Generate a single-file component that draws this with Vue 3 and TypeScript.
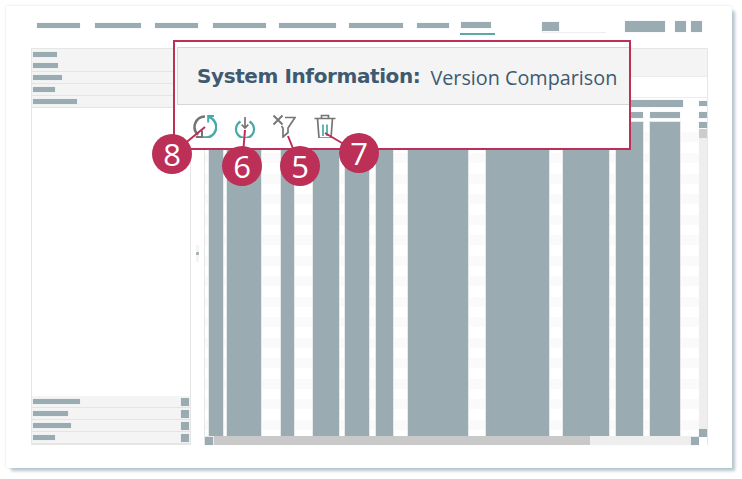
<script setup lang="ts">
interface NavItem { w: number; gap: number; active?: boolean }
interface Col { w: number; gap: number }

const navItems: NavItem[] = [
  { w: 43, gap: 15 }, { w: 46, gap: 14 }, { w: 43, gap: 15 }, { w: 53, gap: 13 },
  { w: 57, gap: 13 }, { w: 54, gap: 14 }, { w: 32, gap: 11 }, { w: 30, gap: 47, active: true },
]
const topRows = [24, 25, 29, 22, 44]
const bottomRows = [47, 35, 38, 22]
const cols: Col[] = [
  { w: 14, gap: 4 }, { w: 34, gap: 20 }, { w: 13, gap: 19 }, { w: 26, gap: 6 },
  { w: 24, gap: 7 }, { w: 17, gap: 15 }, { w: 60, gap: 18 }, { w: 63, gap: 14 },
  { w: 46, gap: 7 }, { w: 27, gap: 7 }, { w: 30, gap: 0 },
]
const badges = [
  { n: 8, key: 'b8' }, { n: 6, key: 'b6' }, { n: 5, key: 'b5' }, { n: 7, key: 'b7' },
]
</script>

<template>
  <div class="page">
    <div class="card">
      <header class="nav">
        <div
          v-for="(item, i) in navItems"
          :key="i"
          class="nav-item"
          :class="{ active: item.active }"
          :style="{ marginRight: item.gap + 'px' }"
        >
          <span class="bar nav-bar" :style="{ width: item.w + 'px' }"></span>
        </div>
        <div class="search"><span class="bar search-bar"></span></div>
        <span class="bar action wide"></span>
        <span class="bar action small first"></span>
        <span class="bar action small"></span>
      </header>

      <main class="main">
        <aside class="left">
          <div class="left-rows">
            <div class="row double">
              <span class="bar row-bar" :style="{ width: topRows[0] + 'px' }"></span>
              <span class="bar row-bar" :style="{ width: topRows[1] + 'px' }"></span>
            </div>
            <div v-for="w in topRows.slice(2)" :key="w" class="row">
              <span class="bar row-bar" :style="{ width: w + 'px' }"></span>
            </div>
          </div>
          <div class="left-rows bottom">
            <div v-for="w in bottomRows" :key="w" class="row spread">
              <span class="bar row-bar" :style="{ width: w + 'px' }"></span>
              <span class="bar row-square"></span>
            </div>
          </div>
        </aside>

        <div class="splitter"><span class="grip"></span></div>

        <section class="right">
          <div class="right-head"></div>
          <div class="right-sub"></div>
          <div class="grid">
            <div class="grid-main">
              <div class="grid-top"><span class="bar grid-top-bar"></span></div>
              <div class="columns">
                <div
                  v-for="(c, i) in cols"
                  :key="i"
                  class="col"
                  :style="{ width: c.w + 'px', marginRight: c.gap + 'px' }"
                >
                  <span class="bar col-head"></span>
                  <span class="bar col-body"></span>
                </div>
              </div>
              <div class="hscroll">
                <span class="bar sb-btn"></span>
                <span class="h-thumb"></span>
                <span class="h-track"></span>
                <span class="bar sb-btn"></span>
              </div>
            </div>
            <div class="vscroll">
              <span class="bar v-a"></span>
              <span class="bar v-b"></span>
              <span class="bar v-c"></span>
              <span class="v-thumb"></span>
              <span class="v-track"></span>
              <span class="bar v-d"></span>
              <span class="v-corner"></span>
            </div>
          </div>
        </section>
      </main>
    </div>

    <div class="callout">
      <div class="callout-head">
        <span class="title">System Information:</span>
        <span class="subtitle">Version Comparison</span>
      </div>
      <div class="tools">
        <svg class="icon" viewBox="0 0 24 24" fill="none" stroke-width="2.5">
          <path d="M12 2.4A10.5 10.5 0 0 0 5.2 20.8" stroke="#757575" />
          <path d="M9 16.6V23H2.8" stroke="#757575" stroke-width="2" />
          <path d="M15.4 2.9A10.5 10.5 0 1 1 10 23.2" stroke="#48aaa6" />
          <path d="M21 2H15.2V8.4" stroke="#48aaa6" stroke-width="2" />
        </svg>
        <svg class="icon" viewBox="0 0 24 24" fill="none">
          <path d="M7.5 7.5A9 9 0 1 0 16.5 7.5" stroke="#48aaa6" stroke-width="2.2" />
          <path d="M12 3V14M8.7 10.7L12 14L15.3 10.7" stroke="#757575" stroke-width="1.7" />
        </svg>
        <svg class="icon" viewBox="0 0 24 24" fill="none" stroke="#757575" stroke-width="1.7">
          <path d="M1.5 1.5L10.5 10.5M10.5 1.5L1.5 10.5" stroke-width="1.9" />
          <path d="M13 3.5H23L16 14V18.5L11 23V14L9.5 12" />
        </svg>
        <svg class="icon" viewBox="0 0 24 24" fill="none" stroke="#757575" stroke-width="1.7">
          <path d="M1.5 4.5H22.5M8.5 4.5V1.5H15.5V4.5" />
          <path d="M4.5 4.5L6 24H18L19.5 4.5" />
          <path d="M10 10.5V22M14 10.5V22" stroke="#48aaa6" />
        </svg>
      </div>
    </div>

    <svg class="leaders" viewBox="0 0 742 479">
      <path d="M205 127L172 154M245 130L242 166M288 136L300 166M325 133L359 153" />
    </svg>
    <div v-for="b in badges" :key="b.key" class="badge" :class="b.key">{{ b.n }}</div>
  </div>
</template>

<style scoped>
.page {
  position: relative;
  width: 742px;
  height: 479px;
  overflow: hidden;
  background: #fff;
  padding: 6px 0 0 6px;
  box-sizing: border-box;
}
.card {
  width: 726px;
  height: 462px;
  background: #fff;
  box-shadow: 4px 4px 3px -1px #b6c6cc, 0 0 2px #d3dcdf;
}
.bar {
  display: block;
  background: #9aabb2;
  box-shadow: 0 0 1px #d5dcdf;
}

/* nav */
.nav {
  height: 42px;
  box-sizing: border-box;
  padding: 15px 0 0 31px;
  display: flex;
  align-items: flex-start;
}
.nav-item {
  padding-top: 2px;
}
.nav-bar {
  height: 5px;
}
.nav-item.active {
  width: 35px;
  height: 14px;
  border-bottom: 2px solid #5aa9a5;
  padding-left: 1px;
  box-sizing: border-box;
  padding-top: 1px;
}
.nav-item.active .nav-bar {
  height: 6px;
}
.search {
  width: 64px;
  height: 10px;
  margin: 1px 19px 0 0;
  border-bottom: 1px solid #eee;
}
.search-bar {
  width: 17px;
  height: 9px;
}
.action {
  height: 11px;
}
.wide {
  width: 40px;
  margin-right: 10px;
}
.small {
  width: 11px;
}
.first {
  margin-right: 5px;
}

/* main */
.main {
  margin-left: 25px;
  height: 397px;
  display: flex;
}
.left {
  width: 160px;
  box-sizing: border-box;
  border: 1px solid #e6e6e6;
  display: flex;
  flex-direction: column;
  justify-content: space-between;
}
.row {
  height: 12px;
  box-sizing: border-box;
  background: #f4f4f4;
  border-bottom: 1px solid #e4e4e4;
  padding-left: 1px;
  display: flex;
  align-items: center;
}
.row.double {
  height: 23px;
  flex-direction: column;
  align-items: flex-start;
  justify-content: space-around;
}
.row.spread {
  justify-content: space-between;
  padding-right: 1px;
}
.row-bar {
  height: 5px;
}
.row-square {
  width: 8px;
  height: 8px;
}
.splitter {
  width: 13px;
  position: relative;
}
.grip {
  position: absolute;
  left: 5px;
  top: 197px;
  width: 3px;
  height: 17px;
  background: radial-gradient(circle at center, #a9b5ba 0 1.5px, #f4f4f4 1.6px);
}
.right {
  width: 504px;
  box-sizing: border-box;
  border: 1px solid #e6e6e6;
  border-bottom: 0;
  display: flex;
  flex-direction: column;
}
.right-head {
  height: 27px;
  background: #f4f4f4;
}
.right-sub {
  height: 21px;
  background: #fff;
  border-top: 1px solid #ececec;
  box-sizing: border-box;
}
.grid {
  flex: 1;
  display: flex;
  min-height: 0;
  border-top: 1px solid #ececec;
}
.grid-main {
  width: 494px;
  display: flex;
  flex-direction: column;
}
.grid-top {
  height: 10px;
  padding: 2px 0 0 0;
  box-sizing: content-box;
}
.grid-top-bar {
  width: 478px;
  height: 7px;
}
.columns {
  flex: 1;
  display: flex;
  padding-left: 4px;
  min-height: 0;
  background: linear-gradient(#fff, #fff) no-repeat top / 100% 13px,
    repeating-linear-gradient(#fff 0, #fff 2px, #fafafa 2px, #fafafa 12px, #fff 12px, #fff 20.5px);
}
.col {
  display: flex;
  flex-direction: column;
  flex: none;
}
.col-head {
  height: 6px;
  margin: 2px 0 4px;
}
.col-body {
  flex: 1;
  box-shadow: 0 0 0 1px #e6eaec;
}
.hscroll {
  height: 9px;
  display: flex;
  background: #eee;
}
.sb-btn {
  width: 8px;
  height: 8px;
  margin-top: 1px;
  flex: none;
}
.h-thumb {
  width: 376px;
  margin-left: 1px;
  background: #c9c9c9;
}
.h-track {
  flex: 1;
}
.vscroll {
  flex: 1;
  display: flex;
  flex-direction: column;
  align-items: flex-end;
}
.vscroll span {
  width: 8px;
  flex: none;
}
.v-a {
  height: 5px;
  margin-top: 3px;
}
.v-b {
  height: 6px;
  margin-top: 6px;
}
.v-c {
  height: 6px;
  margin-top: 4px;
}
.v-thumb {
  height: 9px;
  margin-top: 1px;
  background: #ccc;
}
.vscroll .v-track {
  flex: 1;
  background: #eee;
}
.v-d {
  height: 8px;
}
.v-corner {
  height: 8px;
  background: #fff;
}

/* callout */
.callout {
  position: absolute;
  left: 173px;
  top: 40px;
  width: 458px;
  height: 110px;
  box-sizing: border-box;
  border: 2px solid #bc2f57;
  background: #fff;
  padding: 5px 0 0 2px;
}
.callout-head {
  height: 58px;
  box-sizing: border-box;
  background: #f4f4f4;
  border: 1px solid #d6d6d6;
  border-right: 0;
  display: flex;
  align-items: center;
  padding: 3px 0 0 19px;
}
.title {
  font: 700 20px "DejaVu Sans", sans-serif;
  letter-spacing: -0.4px;
  color: #3f5a70;
  margin: 0 10px 4px 0;
}
.subtitle {
  font: 400 19.8px "Open Sans", sans-serif;
  color: #3f5a70;
}
.tools {
  display: grid;
  grid-template-columns: 40px 39px 41px 24px;
  padding: 9px 0 0 16px;
}
.icon {
  width: 24px;
  height: 24px;
  display: block;
}
.leaders {
  position: absolute;
  left: 0;
  top: 0;
  width: 742px;
  height: 479px;
  pointer-events: none;
}
.leaders path {
  fill: none;
  stroke: #bc2f57;
  stroke-width: 2;
}
.badge {
  position: absolute;
  width: 40px;
  height: 40px;
  border-radius: 50%;
  background: #bc2f57;
  color: #fff;
  font: 400 31px/40px "Open Sans", sans-serif;
  text-align: center;
}
.b8 { left: 152px; top: 134px; }
.b6 { left: 222px; top: 146px; }
.b5 { left: 280px; top: 146px; }
.b7 { left: 339px; top: 133px; }
</style>
